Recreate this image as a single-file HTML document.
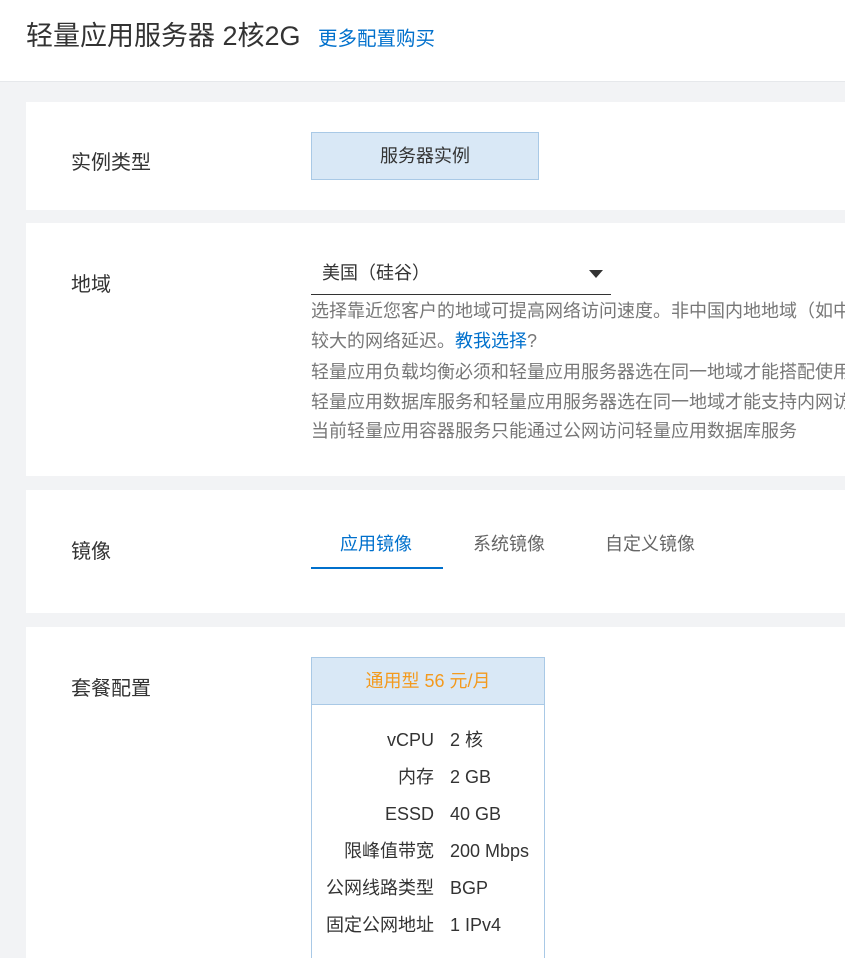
<!DOCTYPE html>
<html style="width:845px;height:958px;overflow:hidden"><head><meta charset="utf-8"><style>
*{margin:0;padding:0;box-sizing:border-box}
body{width:845px;height:958px;overflow:hidden;background:#f2f3f5;font-family:"Liberation Sans","Noto Sans CJK SC",sans-serif;color:#333;position:relative}
.abs{position:absolute;white-space:nowrap}
.hdr{position:absolute;left:0;top:0;width:845px;height:82px;background:#fff;border-bottom:1px solid #e6e8eb}
.card{position:absolute;left:26px;width:819px;background:#fff}
.lbl{font-size:20px;color:#333}
.desc{font-size:18px;color:#777;line-height:30px}
</style></head><body>
<div class="hdr">
 <div class="abs" style="left:26px;top:18px;font-size:27px;color:#333;line-height:36px">轻量应用服务器 2核2G</div>
 <div class="abs" style="left:318px;top:25px;font-size:19.5px;color:#0070cc;line-height:28px">更多配置购买</div>
</div>
<div class="card" style="top:102px;height:108px"></div>
<div class="card" style="top:223px;height:253px"></div>
<div class="card" style="top:490px;height:123px"></div>
<div class="card" style="top:627px;height:331px"></div>

<div class="abs lbl" style="left:71px;top:148px;line-height:30px">实例类型</div>
<div class="abs" style="left:311px;top:132px;width:228px;height:48px;background:#d9e8f6;border:1px solid #a9c9e6;text-align:center;line-height:46px;font-size:18px;color:#333">服务器实例</div>

<div class="abs lbl" style="left:71px;top:270px;line-height:30px">地域</div>
<div class="abs" style="left:322px;top:258px;font-size:18px;line-height:30px;color:#333">美国（硅谷）</div>
<div class="abs" style="left:589px;top:270px;width:0;height:0;border-left:7px solid transparent;border-right:7px solid transparent;border-top:8px solid #333"></div>
<div class="abs" style="left:311px;top:294px;width:300px;height:1px;background:#333"></div>
<div style="position:absolute;left:311px;top:296px;width:534px;height:170px;overflow:hidden">
<div class="abs desc" style="left:0;top:0">选择靠近您客户的地域可提高网络访问速度。非中国内地地域（如中国香港</div>
<div class="abs desc" style="left:0;top:30px">较大的网络延迟。<span style="color:#0070cc">教我选择</span>?</div>
<div class="abs desc" style="left:0;top:61px">轻量应用负载均衡必须和轻量应用服务器选在同一地域才能搭配使用</div>
<div class="abs desc" style="left:0;top:91px">轻量应用数据库服务和轻量应用服务器选在同一地域才能支持内网访问</div>
<div class="abs desc" style="left:0;top:120px">当前轻量应用容器服务只能通过公网访问轻量应用数据库服务</div>
</div>

<div class="abs lbl" style="left:71px;top:537px;line-height:30px">镜像</div>
<div class="abs" style="left:340px;top:529px;font-size:18px;line-height:30px;color:#0070cc">应用镜像</div>
<div class="abs" style="left:473px;top:529px;font-size:18px;line-height:30px;color:#666">系统镜像</div>
<div class="abs" style="left:605px;top:529px;font-size:18px;line-height:30px;color:#666">自定义镜像</div>
<div class="abs" style="left:311px;top:567px;width:132px;height:2px;background:#0070cc"></div>

<div class="abs lbl" style="left:71px;top:674px;line-height:30px">套餐配置</div>
<div class="abs" style="left:311px;top:657px;width:234px;height:301px;border:1px solid #a9c9e6;border-bottom:none;background:#fff"></div>
<div class="abs" style="left:312px;top:658px;width:232px;height:47px;background:#d9e8f6;border-bottom:1px solid #a9c9e6;text-align:center;line-height:47px;font-size:18px;color:#f39a1e">通用型 56 元/月</div>
<div class="abs" style="left:312px;top:722px;width:122px;text-align:right;font-size:18px;line-height:37px;color:#333;white-space:normal">vCPU<br>内存<br>ESSD<br>限峰值带宽<br>公网线路类型<br>固定公网地址</div>
<div class="abs" style="left:450px;top:722px;font-size:18px;line-height:37px;color:#333">2 核<br>2 GB<br>40 GB<br>200 Mbps<br>BGP<br>1 IPv4</div>
</body></html>
